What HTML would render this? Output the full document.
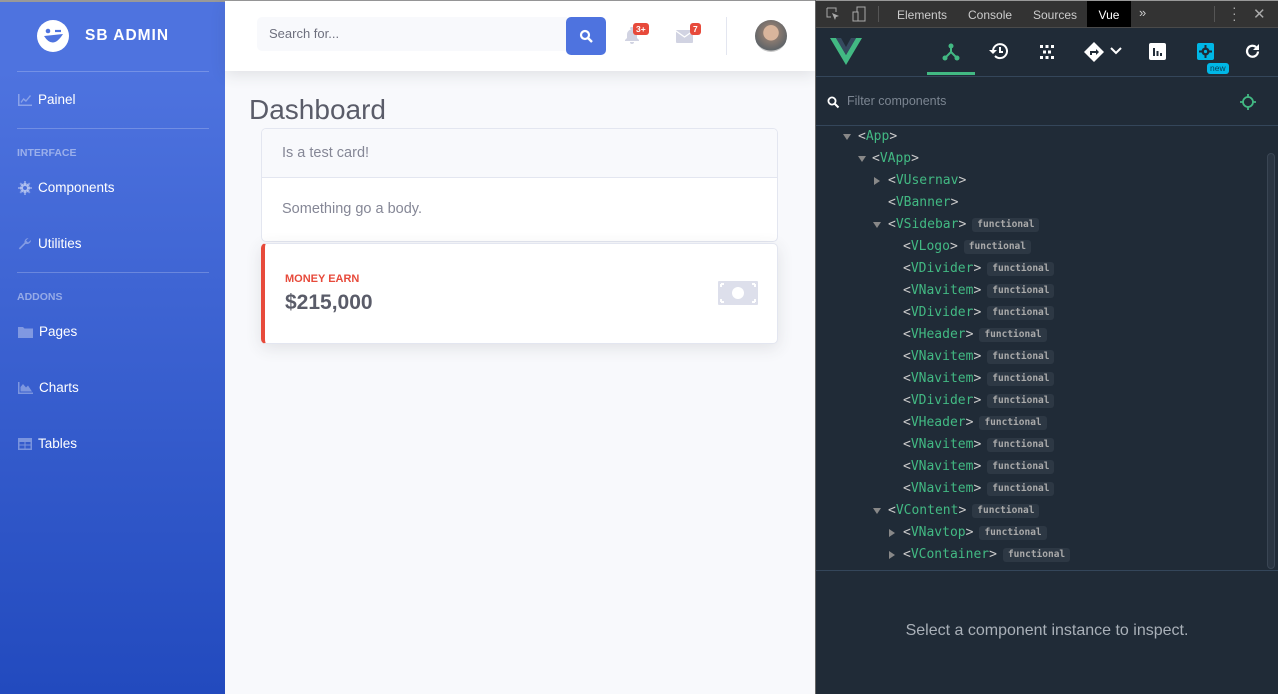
<!DOCTYPE html>
<html><head><meta charset="utf-8"><style>
*{box-sizing:border-box;margin:0;padding:0}
body{width:1278px;height:694px;overflow:hidden;position:relative;font-family:"Liberation Sans",sans-serif;background:#f8f9fc}
.a{position:absolute}
#sb{left:0;top:0;width:225px;height:694px;background:linear-gradient(180deg,#4e73df 10%,#224abe 100%);border-top:2px solid #999}
.hr{position:absolute;left:17px;width:192px;height:1px;background:rgba(255,255,255,.22)}
.nav{position:absolute;left:18px;color:#fff;font-size:13.5px;display:flex;align-items:center;gap:6px}
.nav svg{fill:rgba(255,255,255,.35)}
.hd{position:absolute;left:17px;font-size:10.5px;font-weight:bold;color:rgba(255,255,255,.45)}
#dt{left:816px;top:0;width:462px;height:694px;background:#202b37;font-family:"Liberation Sans",sans-serif}
.row{position:absolute;height:22px;line-height:22px;font-family:"DejaVu Sans Mono",monospace;font-size:13px;color:#ccc;white-space:nowrap}
.row b{font-weight:normal;color:#42b983}
.fn{display:inline-block;font-family:"DejaVu Sans Mono",monospace;font-size:9.5px;font-weight:bold;color:#aaa;background:#2d3844;border-radius:3px;padding:0 5px;line-height:14px;margin-left:6px;vertical-align:1px}
.tri{position:absolute;width:0;height:0}
.dn{border-left:4px solid transparent;border-right:4px solid transparent;border-top:6px solid #888}
.rt{border-top:4px solid transparent;border-bottom:4px solid transparent;border-left:6px solid #888}
#tree{position:absolute;left:0;top:2px;width:462px;height:450px}
</style></head><body>
<div class="a" style="left:0;top:0;width:816px;height:1px;background:#999"></div>
<div id="sb" class="a">
 <svg class="a" style="left:37px;top:18px" width="32" height="32" viewBox="0 0 32 32"><circle cx="16" cy="16" r="16" fill="#fff"/><path d="M7 16 Q16 30 26 14 Z" fill="#4e73df"/><circle cx="11" cy="11" r="2.3" fill="#4e73df"/><path d="M18 11 h6" stroke="#4e73df" stroke-width="2.2"/></svg>
 <div class="a" style="left:85px;top:25px;color:#fff;font-weight:bold;font-size:15.5px;letter-spacing:1px">SB ADMIN</div>
 <div class="hr" style="top:69px"></div>
 <div class="nav" style="top:90px"><svg width="14" height="12" viewBox="0 0 14 12"><path d="M0 0h1.5v10.5H14V12H0z M2.5 8l3-4 2.5 2 4-5 1 1-5 6-2.5-2-2 3z"/></svg>Painel</div>
 <div class="hr" style="top:126px"></div>
 <div class="hd" style="top:145px">INTERFACE</div>
 <div class="nav" style="top:178px"><svg width="14" height="14" viewBox="0 0 14 14"><circle cx="7" cy="7" r="5"/><path d="M6 0h2v14H6zM0 6h14v2H0zM1.5 2.9l1.4-1.4 9.6 9.6-1.4 1.4zM11.1 1.5l1.4 1.4-9.6 9.6-1.4-1.4z"/><circle cx="7" cy="7" r="2" fill="#4a6edb"/></svg>Components</div>
 <div class="nav" style="top:234px"><svg width="14" height="14" viewBox="0 0 14 14"><path d="M13 3a4 4 0 0 1-5.3 3.8L2 12.5 0.8 11.3 6.5 5.6A4 4 0 0 1 10.5 1L8 3.5l2 2z"/></svg>Utilities</div>
 <div class="hr" style="top:270px"></div>
 <div class="hd" style="top:289px">ADDONS</div>
 <div class="nav" style="top:322px"><svg width="15" height="12" viewBox="0 0 15 12"><path d="M0 1h5l1.5 1.5H15V12H0z"/></svg>Pages</div>
 <div class="nav" style="top:378px"><svg width="15" height="12" viewBox="0 0 15 12"><path d="M0 0h1.5v10.5H15V12H0zM2.5 9.5V5l2.5-3 3 3.5 2-2 4 6z"/></svg>Charts</div>
 <div class="nav" style="top:434px"><svg width="14" height="12" viewBox="0 0 14 12"><path d="M0 0h14v12H0z M1.5 4v2.5h5V4z M7.5 4v2.5h5V4z M1.5 7.5V10.5h5V7.5z M7.5 7.5V10.5h5V7.5z" fill-rule="evenodd"/></svg>Tables</div>
</div>
<div class="a" style="left:225px;top:1px;width:590px;height:70px;background:#fff;box-shadow:0 4px 14px rgba(58,59,69,.12)"></div>
<div class="a" style="left:257px;top:17px;width:310px;height:34px;background:#f8f9fc;border-radius:5px 0 0 5px;font-size:13px;color:#6e707e;line-height:34px;padding-left:12px">Search for...</div>
<div class="a" style="left:566px;top:17px;width:40px;height:38px;background:#4e73df;border-radius:5px"><svg class="a" style="left:13px;top:12px" width="14" height="14" viewBox="0 0 14 14"><circle cx="6" cy="6" r="4" stroke="#fff" stroke-width="2.2" fill="none"/><path d="M9 9l4 4" stroke="#fff" stroke-width="2.4"/></svg></div>
<svg class="a" style="left:625px;top:27px" width="14" height="17" viewBox="0 0 14 17"><path d="M7 0a1 1 0 0 1 1 1.5A5 5 0 0 1 12 7v4l2 2v1H0v-1l2-2V7a5 5 0 0 1 4-4.5A1 1 0 0 1 7 0zM5 15h4a2 2 0 0 1-4 0z" fill="#d1d3e2"/></svg>
<div class="a" style="left:633px;top:23px;background:#e74a3b;color:#fff;font-size:8.5px;font-weight:bold;border-radius:3px;padding:0 3px;line-height:12px">3+</div>
<svg class="a" style="left:676px;top:30px" width="17" height="13" viewBox="0 0 17 13"><rect width="17" height="13" rx="1" fill="#d1d3e2"/><path d="M0 1l8.5 6L17 1" stroke="#fff" stroke-width="1.3" fill="none"/></svg>
<div class="a" style="left:690px;top:23px;background:#e74a3b;color:#fff;font-size:8.5px;font-weight:bold;border-radius:3px;padding:0 3px;line-height:12px">7</div>
<div class="a" style="left:726px;top:17px;width:1px;height:38px;background:#e3e6f0"></div>
<div class="a" style="left:755px;top:20px;width:32px;height:32px;border-radius:50%;background:radial-gradient(circle at 50% 40%,#d9b59c 0 30%,#8a7a70 32%,#5f6468 70%,#c8c8c8 72%)"></div>
<div class="a" style="left:249px;top:94px;font-size:28px;color:#5a5c69">Dashboard</div>
<div class="a" style="left:261px;top:128px;width:517px;height:114px;background:#fff;border:1px solid #e3e6f0;border-radius:5px;overflow:hidden">
 <div style="height:49px;background:#f8f9fc;border-bottom:1px solid #e3e6f0;padding-left:20px;line-height:48px;font-size:14.5px;color:#858796">Is a test card!</div>
 <div style="padding-left:20px;line-height:62px;font-size:14.5px;color:#858796">Something go a body.</div>
</div>
<div class="a" style="left:261px;top:243px;width:517px;height:101px;background:#fff;border:1px solid #e3e6f0;border-left:4px solid #e74a3b;border-radius:5px;box-shadow:0 4px 16px rgba(58,59,69,.12)">
 <div class="a" style="left:20px;top:29px;font-size:11px;font-weight:bold;color:#e74a3b">MONEY EARN</div>
 <div class="a" style="left:20px;top:47px;font-size:21px;font-weight:bold;color:#5a5c69">$215,000</div>
 <svg class="a" style="left:453px;top:37px" width="40" height="24" viewBox="0 0 40 24"><rect width="40" height="24" rx="1" fill="#dddfeb"/><circle cx="20" cy="12" r="6" fill="#fff"/><path d="M3 3h3M3 3v3M37 3h-3M37 3v3M3 21h3M3 21v-3M37 21h-3M37 21v-3" stroke="#fff" stroke-width="2"/></svg>
</div>
<div class="a" style="left:815px;top:0;width:1px;height:694px;background:#666"></div>
<div id="dt" class="a">
 <div class="a" style="left:0;top:0;width:462px;height:28px;background:#333;border-bottom:1px solid #4a4a4a;border-top:1px solid #999"></div>
 <svg class="a" style="left:10px;top:7px" width="14" height="14" viewBox="0 0 14 14"><path d="M1 1h9v4M1 1v9h4" stroke="#aaa" fill="none"/><path d="M6 6l7 3-3 1-1 3z" fill="#aaa"/></svg>
 <svg class="a" style="left:36px;top:6px" width="14" height="16" viewBox="0 0 14 16"><rect x="5" y="1" width="8" height="14" stroke="#aaa" fill="none"/><rect x="1" y="6" width="5" height="9" stroke="#aaa" fill="#333"/></svg>
 <div class="a" style="left:62px;top:6px;width:1px;height:16px;background:#555"></div>
 <div class="a" style="left:81px;top:8px;font-size:12px;color:#ccc">Elements</div>
 <div class="a" style="left:152px;top:8px;font-size:12px;color:#ccc">Console</div>
 <div class="a" style="left:217px;top:8px;font-size:12px;color:#ccc">Sources</div>
 <div class="a" style="left:271px;top:1px;width:44px;height:26px;background:#000;color:#fff;font-size:12px;text-align:center;line-height:28px">Vue</div>
 <div class="a" style="left:323px;top:5px;font-size:13px;color:#ccc">»</div>
 <div class="a" style="left:398px;top:6px;width:1px;height:16px;background:#555"></div>
 <div class="a" style="left:416px;top:4px;font-size:14px;color:#aaa;line-height:6px">·<br>·<br>·</div>
 <div class="a" style="left:437px;top:5px;font-size:15px;color:#aaa">✕</div>
 <div class="a" style="left:0;top:76px;width:462px;height:1px;background:#34465a"></div>
 <svg class="a" style="left:14px;top:38px" width="32" height="27" viewBox="0 0 32 27"><path d="M0 0h6l10 17L26 0h6L16 27z" fill="#42b983"/><path d="M6 0h5l5 9 5-9h5L16 17z" fill="#35495e"/></svg>
 <div class="a" style="left:111px;top:72px;width:48px;height:3px;background:#42b983"></div>
 <svg class="a" style="left:126px;top:43px" width="18" height="18" viewBox="0 0 18 18"><circle cx="9" cy="3" r="2.5" fill="#42b983"/><circle cx="3" cy="15" r="2.5" fill="#42b983"/><circle cx="15" cy="15" r="2.5" fill="#42b983"/><path d="M9 3v6L3 15M9 9l6 6" stroke="#42b983" stroke-width="2" fill="none"/></svg>
 <svg class="a" style="left:173px;top:42px" width="20" height="18" viewBox="0 0 20 18"><path d="M4 9a7 7 0 1 1 2 5" stroke="#fff" stroke-width="2" fill="none"/><path d="M0 8h8l-4 4z" fill="#fff"/><path d="M11 5v5h3" stroke="#fff" stroke-width="2" fill="none"/></svg>
 <svg class="a" style="left:223px;top:44px" width="16" height="16" viewBox="0 0 16 16" fill="#fff"><rect x="1" y="1" width="3" height="3"/><rect x="6.5" y="1" width="3" height="3"/><rect x="12" y="1" width="3" height="3"/><rect x="4" y="6.5" width="3" height="3"/><rect x="9" y="6.5" width="3" height="3"/><rect x="1" y="12" width="3" height="3"/><rect x="6.5" y="12" width="3" height="3"/><rect x="12" y="12" width="3" height="3"/></svg>
 <svg class="a" style="left:268px;top:42px" width="20" height="20" viewBox="0 0 20 20"><path d="M10 0l10 10-10 10L0 10z" fill="#fff"/><path d="M6 13V9h6V7l3 3-3 3v-2H8v2z" fill="#202b37"/></svg>
 <svg class="a" style="left:294px;top:47px" width="12" height="8" viewBox="0 0 12 8"><path d="M1 1l5 5 5-5" stroke="#fff" stroke-width="2" fill="none"/></svg>
 <svg class="a" style="left:333px;top:43px" width="17" height="17" viewBox="0 0 17 17"><rect width="17" height="17" rx="2" fill="#fff"/><path d="M5 5v8M8.5 8v5M12 10v3" stroke="#202b37" stroke-width="2"/></svg>
 <div class="a" style="left:381px;top:43px;width:17px;height:17px;background:#00b7e6;border-radius:2px"><svg class="a" style="left:2px;top:2px" width="13" height="13" viewBox="0 0 13 13"><circle cx="6.5" cy="6.5" r="4" fill="#202b37"/><path d="M5.5 0h2v13h-2zM0 5.5h13v2H0z" fill="#202b37"/><circle cx="6.5" cy="6.5" r="1.6" fill="#00b7e6"/></svg></div>
 <div class="a" style="left:391px;top:63px;background:#00b7e6;color:#0a3d55;font-size:8.5px;border-radius:3px;padding:0 3px;line-height:11px">new</div>
 <svg class="a" style="left:428px;top:43px" width="17" height="17" viewBox="0 0 17 17"><path d="M14 8.5A5.5 5.5 0 1 1 12 4" stroke="#fff" stroke-width="2.2" fill="none"/><path d="M15 1v6H9z" fill="#fff"/></svg>
 <svg class="a" style="left:11px;top:96px" width="13" height="13" viewBox="0 0 13 13"><circle cx="5" cy="5" r="3.6" stroke="#fff" stroke-width="1.8" fill="none"/><path d="M7.5 7.5l4 4" stroke="#fff" stroke-width="2"/></svg>
 <div class="a" style="left:31px;top:94px;font-size:12.5px;color:#7b8591">Filter components</div>
 <svg class="a" style="left:424px;top:94px" width="16" height="16" viewBox="0 0 16 16"><circle cx="8" cy="8" r="5" stroke="#42b983" stroke-width="1.8" fill="none"/><path d="M8 0v3M8 13v3M0 8h3M13 8h3" stroke="#42b983" stroke-width="1.8"/></svg>
 <div class="a" style="left:0;top:125px;width:462px;height:1px;background:#34465a"></div>
 <div class="a" style="left:451px;top:153px;width:8px;height:416px;background:#2a3542;border-radius:4px;border:1px solid #3a4654"></div>
 <div class="a" style="left:0;top:570px;width:462px;height:1px;background:#34465a"></div>
 <div class="a" style="left:0;top:622px;width:462px;text-align:center;font-size:16px;color:#a9b0b8">Select a component instance to inspect.</div>
 <div id="tree">
 <div class="tri dn" style="left:27px;top:132px"></div><div class="row" style="left:42px;top:124px">&lt;<b>App</b>&gt;</div>
 <div class="tri dn" style="left:42px;top:154px"></div><div class="row" style="left:56px;top:146px">&lt;<b>VApp</b>&gt;</div>
 <div class="tri rt" style="left:58px;top:175px"></div><div class="row" style="left:72px;top:168px">&lt;<b>VUsernav</b>&gt;</div>
 <div class="row" style="left:72px;top:190px">&lt;<b>VBanner</b>&gt;</div>
 <div class="tri dn" style="left:57px;top:220px"></div><div class="row" style="left:72px;top:212px">&lt;<b>VSidebar</b>&gt;<span class="fn">functional</span></div>
 <div class="row" style="left:87px;top:234px">&lt;<b>VLogo</b>&gt;<span class="fn">functional</span></div>
 <div class="row" style="left:87px;top:256px">&lt;<b>VDivider</b>&gt;<span class="fn">functional</span></div>
 <div class="row" style="left:87px;top:278px">&lt;<b>VNavitem</b>&gt;<span class="fn">functional</span></div>
 <div class="row" style="left:87px;top:300px">&lt;<b>VDivider</b>&gt;<span class="fn">functional</span></div>
 <div class="row" style="left:87px;top:322px">&lt;<b>VHeader</b>&gt;<span class="fn">functional</span></div>
 <div class="row" style="left:87px;top:344px">&lt;<b>VNavitem</b>&gt;<span class="fn">functional</span></div>
 <div class="row" style="left:87px;top:366px">&lt;<b>VNavitem</b>&gt;<span class="fn">functional</span></div>
 <div class="row" style="left:87px;top:388px">&lt;<b>VDivider</b>&gt;<span class="fn">functional</span></div>
 <div class="row" style="left:87px;top:410px">&lt;<b>VHeader</b>&gt;<span class="fn">functional</span></div>
 <div class="row" style="left:87px;top:432px">&lt;<b>VNavitem</b>&gt;<span class="fn">functional</span></div>
 <div class="row" style="left:87px;top:454px">&lt;<b>VNavitem</b>&gt;<span class="fn">functional</span></div>
 <div class="row" style="left:87px;top:476px">&lt;<b>VNavitem</b>&gt;<span class="fn">functional</span></div>
 <div class="tri dn" style="left:57px;top:506px"></div><div class="row" style="left:72px;top:498px">&lt;<b>VContent</b>&gt;<span class="fn">functional</span></div>
 <div class="tri rt" style="left:73px;top:527px"></div><div class="row" style="left:87px;top:520px">&lt;<b>VNavtop</b>&gt;<span class="fn">functional</span></div>
 <div class="tri rt" style="left:73px;top:549px"></div><div class="row" style="left:87px;top:542px">&lt;<b>VContainer</b>&gt;<span class="fn">functional</span></div>
 </div>
</div>
</body></html>
